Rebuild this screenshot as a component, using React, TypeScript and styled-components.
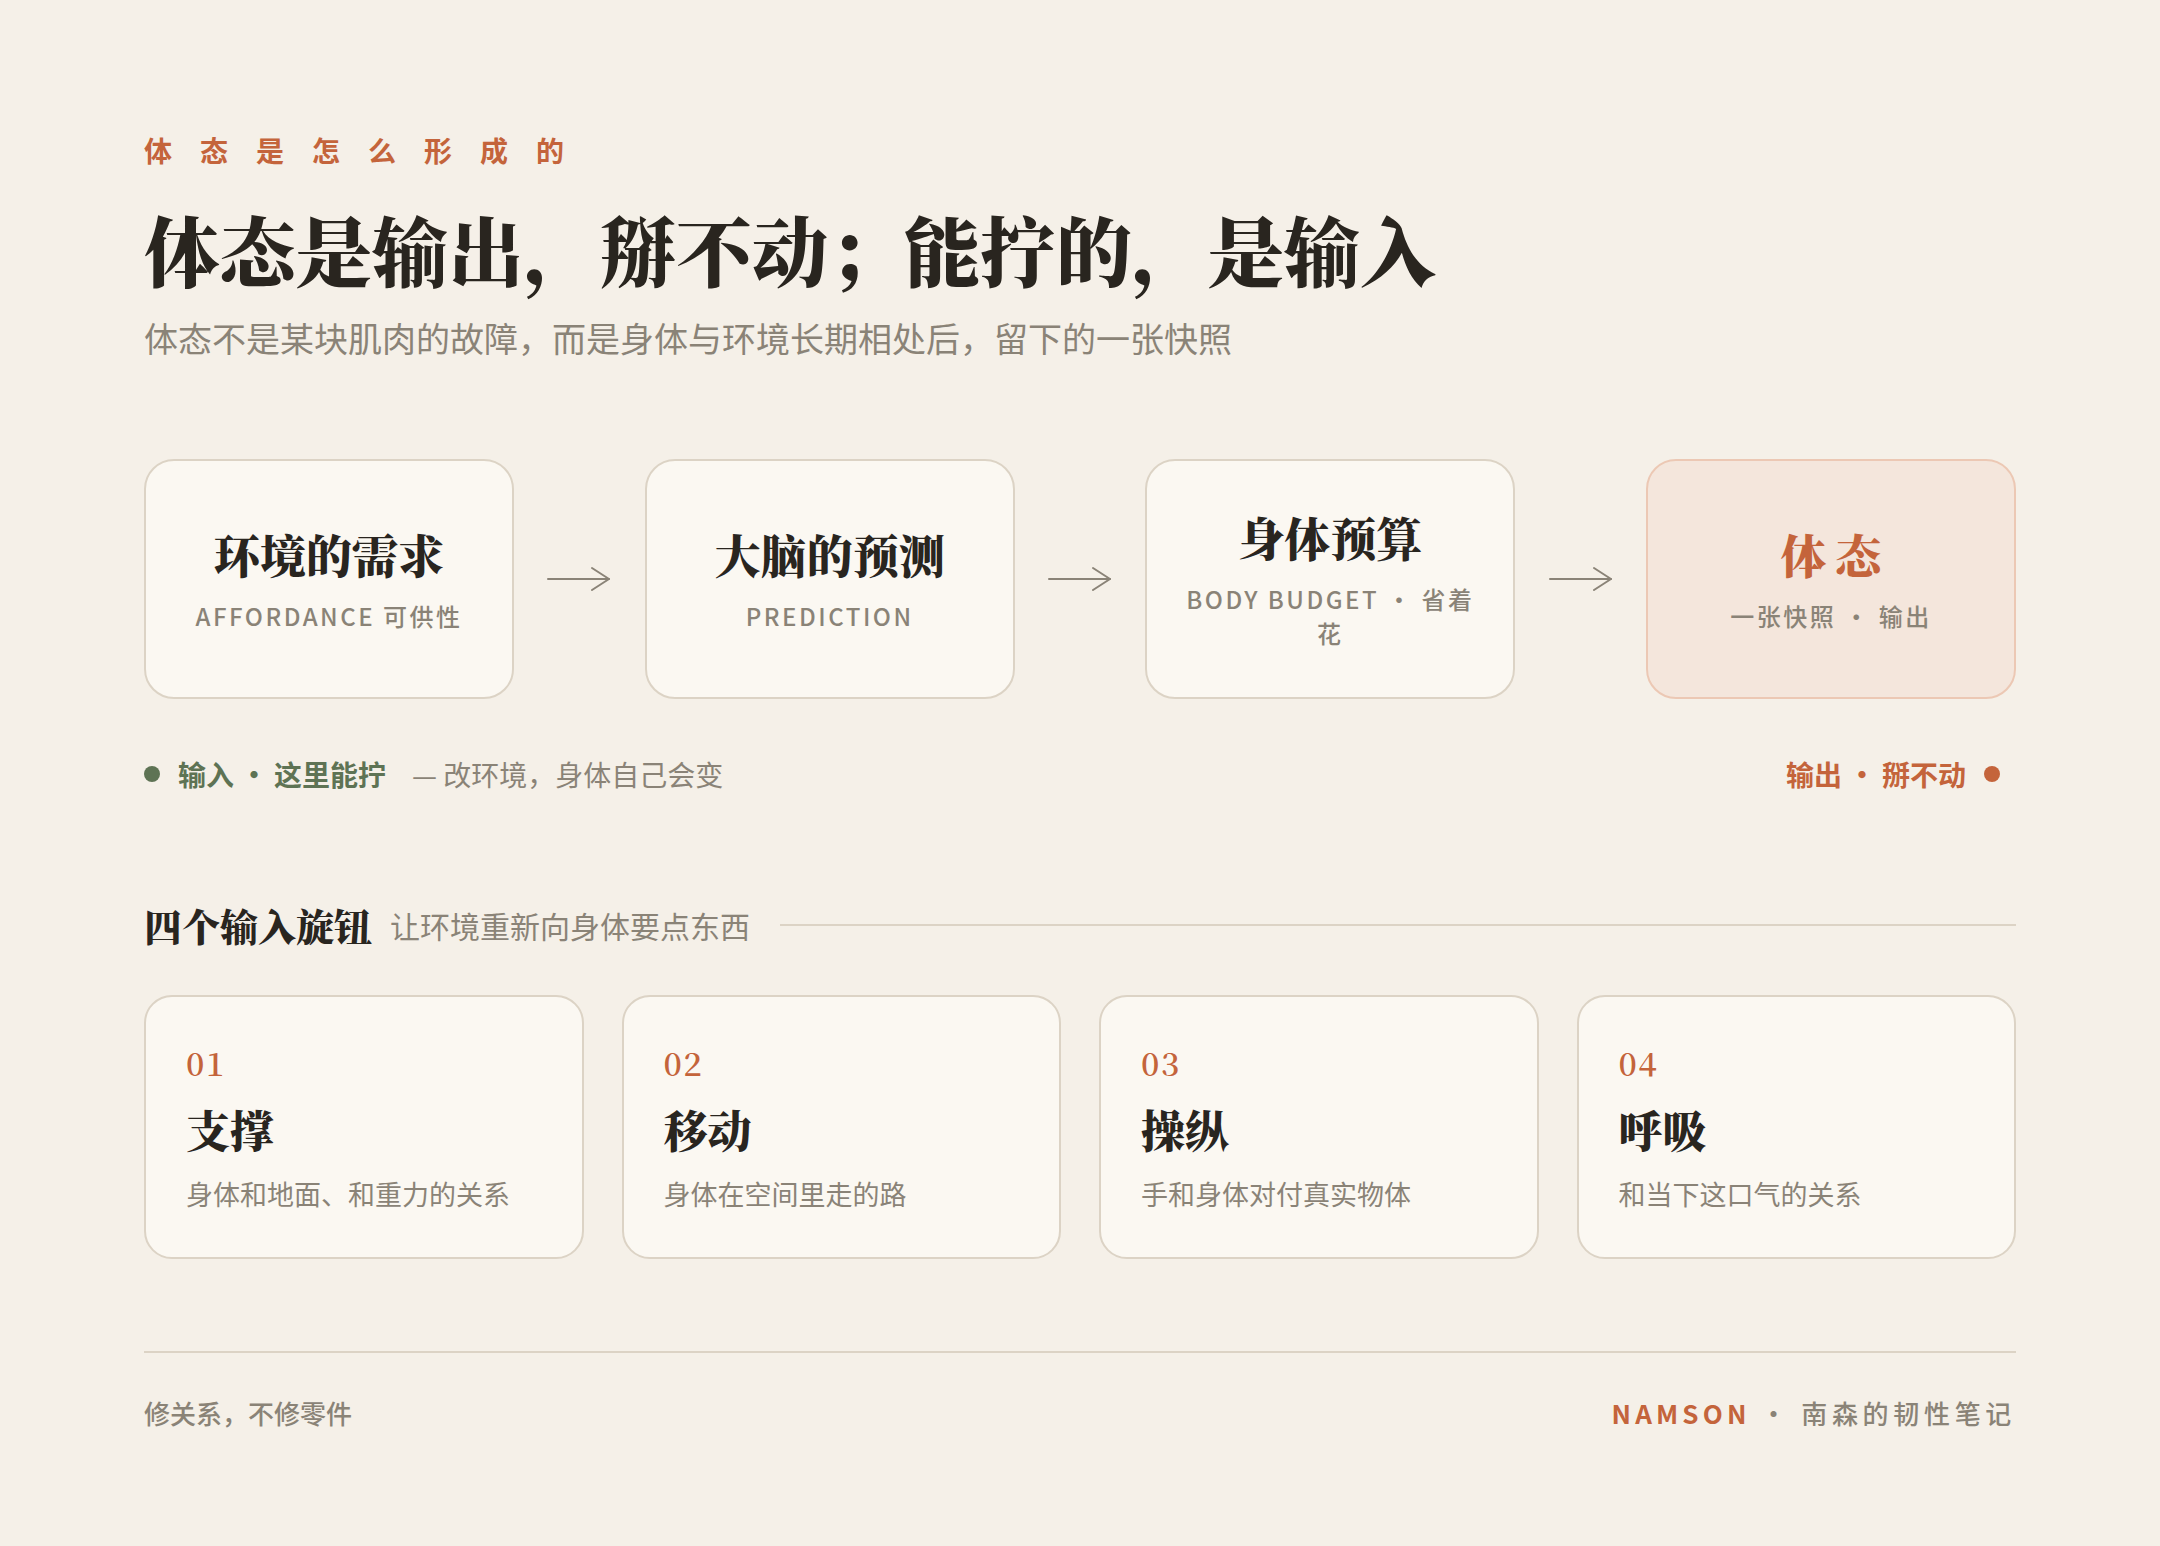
import React, { FC } from 'react'
import styled, { createGlobalStyle } from 'styled-components'

const SERIF = `"Noto Serif CJK SC", "Noto Serif SC", "Source Han Serif SC", "Noto Sans CJK SC", serif`
const SANS = `"Noto Sans CJK SC", "Noto Sans", sans-serif`

const c = {
  bg: '#f5f0e8',
  card: '#fbf8f2',
  border: '#dcd3c5',
  ink: '#29251f',
  muted: '#8a8377',
  accent: '#c4643b',
  green: '#5e7354',
  warmBg: '#f4e6dc',
  warmBorder: '#ecc8b4',
}

const GlobalStyle = createGlobalStyle`
  html, body {
    margin: 0;
    padding: 0;
    background: ${c.bg};
  }
  body {
    font-family: ${SANS};
    color: ${c.ink};
  }
`

type TStep = { title: string; sub: string; final?: boolean }

const steps: TStep[] = [
  { title: '环境的需求', sub: 'AFFORDANCE 可供性' },
  { title: '大脑的预测', sub: 'PREDICTION' },
  { title: '身体预算', sub: 'BODY BUDGET · 省着花' },
  { title: '体态', sub: '一张快照 · 输出', final: true },
]

const knobs = [
  { no: '01', title: '支撑', desc: '身体和地面、和重力的关系' },
  { no: '02', title: '移动', desc: '身体在空间里走的路' },
  { no: '03', title: '操纵', desc: '手和身体对付真实物体' },
  { no: '04', title: '呼吸', desc: '和当下这口气的关系' },
]

const Arrow: FC = () => (
  <svg width="64" height="26" viewBox="0 0 64 26" fill="none">
    <path d="M1 13H62" stroke={c.muted} strokeWidth="2" strokeLinecap="round" />
    <path d="M45 2L62 13L45 24" stroke={c.muted} strokeWidth="2" strokeLinecap="round" strokeLinejoin="round" />
  </svg>
)

export default function App() {
  return (
    <>
      <GlobalStyle />
      <Page>
        <Eyebrow>体态是怎么形成的</Eyebrow>
        <Title>体态是输出，掰不动；能拧的，是输入</Title>
        <Lead>体态不是某块肌肉的故障，而是身体与环境长期相处后，留下的一张快照</Lead>

        <Flow>
          {steps.map((s, i) => (
            <React.Fragment key={s.title}>
              {i > 0 && (
                <ArrowSlot>
                  <Arrow />
                </ArrowSlot>
              )}
              <StepCard $final={s.final}>
                <StepTitle $final={s.final}>{s.title}</StepTitle>
                <StepSub>{s.sub}</StepSub>
              </StepCard>
            </React.Fragment>
          ))}
        </Flow>

        <Legend>
          <LegendSide>
            <Dot $color={c.green} />
            <LegendStrong $color={c.green}>
              输入<Sep>·</Sep>这里能拧
            </LegendStrong>
            <LegendNote>— 改环境，身体自己会变</LegendNote>
          </LegendSide>
          <LegendSide $right>
            <LegendStrong $color={c.accent}>
              输出<Sep>·</Sep>掰不动
            </LegendStrong>
            <Dot $color={c.accent} />
          </LegendSide>
        </Legend>

        <SectionHead>
          <SectionTitle>四个输入旋钮</SectionTitle>
          <SectionSub>让环境重新向身体要点东西</SectionSub>
          <Rule />
        </SectionHead>

        <KnobGrid>
          {knobs.map((k) => (
            <KnobCard key={k.no}>
              <KnobNo>{k.no}</KnobNo>
              <KnobTitle>{k.title}</KnobTitle>
              <KnobDesc>{k.desc}</KnobDesc>
            </KnobCard>
          ))}
        </KnobGrid>

        <Footer>
          <FooterNote>修关系，不修零件</FooterNote>
          <Brand>
            <BrandName>NAMSON</BrandName>
            <BrandSep>·</BrandSep>
            <span>南森的韧性笔记</span>
          </Brand>
        </Footer>
      </Page>
    </>
  )
}

const Page = styled.main`
  width: 2160px;
  min-height: 1546px;
  box-sizing: border-box;
  padding: 133px 144px 0;
  background: ${c.bg};
`

const Eyebrow = styled.div`
  font-family: ${SANS};
  font-size: 28px;
  line-height: 34px;
  font-weight: 700;
  letter-spacing: 28px;
  color: ${c.accent};
`

const Title = styled.h1`
  margin: 36px 0 0;
  font-family: ${SERIF};
  font-size: 76px;
  line-height: 91px;
  font-weight: 900;
  color: ${c.ink};
`

const Lead = styled.p`
  margin: 20px 0 0;
  font-size: 34px;
  line-height: 48px;
  color: ${c.muted};
`

const Flow = styled.section`
  display: flex;
  align-items: stretch;
  margin-top: 97px;
`

const ArrowSlot = styled.div`
  flex: 1;
  display: flex;
  align-items: center;
  justify-content: center;
`

const StepCard = styled.div<{ $final?: boolean }>`
  width: 370px;
  height: 240px;
  box-sizing: border-box;
  padding: 0 32px;
  display: flex;
  flex-direction: column;
  align-items: center;
  justify-content: center;
  gap: 18px;
  text-align: center;
  border-radius: 30px;
  background: ${(p) => (p.$final ? c.warmBg : c.card)};
  border: 2px solid ${(p) => (p.$final ? c.warmBorder : c.border)};
`

const StepTitle = styled.div<{ $final?: boolean }>`
  font-family: ${SERIF};
  font-size: 46px;
  line-height: 55px;
  font-weight: 900;
  color: ${(p) => (p.$final ? c.accent : c.ink)};
  letter-spacing: ${(p) => (p.$final ? '0.2em' : '0')};
  margin-right: ${(p) => (p.$final ? '-0.2em' : '0')};
`

const StepSub = styled.div`
  font-size: 24px;
  line-height: 34px;
  font-weight: 500;
  letter-spacing: 2.5px;
  color: ${c.muted};
`

const Legend = styled.div`
  display: flex;
  justify-content: space-between;
  align-items: center;
  margin-top: 55px;
`

const LegendSide = styled.div<{ $right?: boolean }>`
  display: flex;
  align-items: center;
  gap: 18px;
  padding-right: ${(p) => (p.$right ? '16px' : '0')};
`

const Dot = styled.span<{ $color: string }>`
  width: 16px;
  height: 16px;
  border-radius: 50%;
  background: ${(p) => p.$color};
  flex: none;
`

const LegendStrong = styled.span<{ $color: string }>`
  font-size: 28px;
  line-height: 40px;
  font-weight: 700;
  color: ${(p) => p.$color};
`

const Sep = styled.span`
  margin: 0 6px;
`

const LegendNote = styled.span`
  margin-left: 8px;
  font-size: 28px;
  line-height: 40px;
  color: ${c.muted};
`

const SectionHead = styled.div`
  display: flex;
  align-items: center;
  margin-top: 106px;
`

const SectionTitle = styled.h2`
  margin: 0;
  font-family: ${SERIF};
  font-size: 38px;
  line-height: 50px;
  font-weight: 900;
  color: ${c.ink};
`

const SectionSub = styled.span`
  margin-left: 18px;
  font-size: 30px;
  line-height: 50px;
  color: ${c.muted};
`

const Rule = styled.div`
  flex: 1;
  height: 2px;
  margin-left: 30px;
  background: ${c.border};
`

const KnobGrid = styled.section`
  display: grid;
  grid-template-columns: repeat(4, 1fr);
  gap: 38px;
  margin-top: 45px;
`

const KnobCard = styled.div`
  box-sizing: border-box;
  height: 264px;
  padding: 46px 40px 0;
  border-radius: 28px;
  background: ${c.card};
  border: 2px solid ${c.border};
`

const KnobNo = styled.div`
  font-family: "Noto Serif CJK SC", "Liberation Serif", serif;
  font-size: 32px;
  line-height: 38px;
  font-weight: 600;
  letter-spacing: 0.05em;
  color: ${c.accent};
`

const KnobTitle = styled.div`
  margin-top: 20px;
  font-family: ${SERIF};
  font-size: 44px;
  line-height: 56px;
  font-weight: 900;
  color: ${c.ink};
`

const KnobDesc = styled.div`
  margin-top: 17px;
  font-size: 27px;
  line-height: 40px;
  color: ${c.muted};
`

const Footer = styled.footer`
  display: flex;
  justify-content: space-between;
  align-items: center;
  margin-top: 92px;
  padding-top: 42px;
  border-top: 2px solid ${c.border};
`

const FooterNote = styled.span`
  font-size: 26px;
  line-height: 36px;
  font-weight: 500;
  color: ${c.muted};
`

const Brand = styled.div`
  display: flex;
  align-items: center;
  font-size: 26px;
  line-height: 36px;
  font-weight: 500;
  letter-spacing: 0.18em;
  color: ${c.muted};
`

const BrandName = styled.span`
  color: ${c.accent};
  font-weight: 600;
  letter-spacing: 0.16em;
`

const BrandSep = styled.span`
  margin: 0 10px;
`
